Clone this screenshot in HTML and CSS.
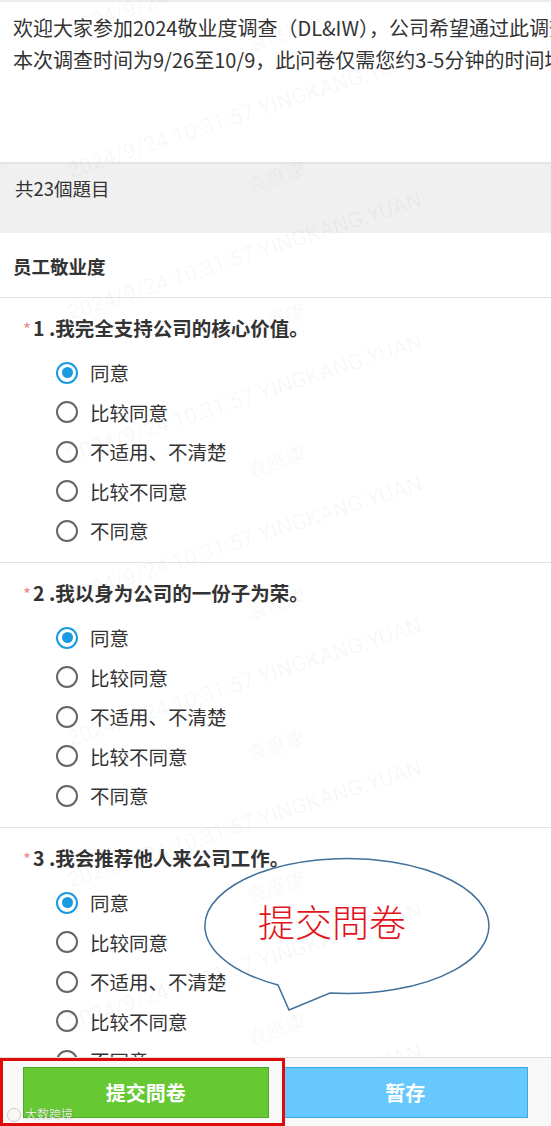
FILE: index.html
```html
<!DOCTYPE html>
<html lang="zh">
<head>
<meta charset="utf-8">
<title>2024敬业度调查</title>
<link rel="stylesheet" href="styles.css">
</head>
<body>
<div class="page">
  <section class="intro">
    <p>欢迎大家参加2024敬业度调查（DL&amp;IW），公司希望通过此调查了解员工的真实想法。</p>
    <p>本次调查时间为9/26至10/9，此问卷仅需您约3-5分钟的时间填写。</p>
  </section>
  <section class="count">共23個題目</section>
  <section class="group-title">员工敬业度</section>

  <section class="question">
    <h3 class="q-title"><span class="req">*</span>1 .我完全支持公司的核心价值。</h3>
    <ul class="options">
      <li><span class="radio checked"></span>同意</li>
      <li><span class="radio"></span>比较同意</li>
      <li><span class="radio"></span>不适用、不清楚</li>
      <li><span class="radio"></span>比较不同意</li>
      <li><span class="radio"></span>不同意</li>
    </ul>
  </section>

  <section class="question">
    <h3 class="q-title"><span class="req">*</span>2 .我以身为公司的一份子为荣。</h3>
    <ul class="options">
      <li><span class="radio checked"></span>同意</li>
      <li><span class="radio"></span>比较同意</li>
      <li><span class="radio"></span>不适用、不清楚</li>
      <li><span class="radio"></span>比较不同意</li>
      <li><span class="radio"></span>不同意</li>
    </ul>
  </section>

  <section class="question">
    <h3 class="q-title"><span class="req">*</span>3 .我会推荐他人来公司工作。</h3>
    <ul class="options">
      <li><span class="radio checked"></span>同意</li>
      <li><span class="radio"></span>比较同意</li>
      <li><span class="radio"></span>不适用、不清楚</li>
      <li><span class="radio"></span>比较不同意</li>
      <li><span class="radio"></span>不同意</li>
    </ul>
  </section>
</div>

<div class="watermarks" aria-hidden="true">
  <div class="wm-tile"><span class="wm-line">2024/9/24 10:31:57 YINGKANG.YUAN</span><span class="wm-name">袁應康</span></div>
  <div class="wm-tile"><span class="wm-line">2024/9/24 10:31:57 YINGKANG.YUAN</span><span class="wm-name">袁應康</span></div>
  <div class="wm-tile"><span class="wm-line">2024/9/24 10:31:57 YINGKANG.YUAN</span><span class="wm-name">袁應康</span></div>
  <div class="wm-tile"><span class="wm-line">2024/9/24 10:31:57 YINGKANG.YUAN</span><span class="wm-name">袁應康</span></div>
  <div class="wm-tile"><span class="wm-line">2024/9/24 10:31:57 YINGKANG.YUAN</span><span class="wm-name">袁應康</span></div>
  <div class="wm-tile"><span class="wm-line">2024/9/24 10:31:57 YINGKANG.YUAN</span><span class="wm-name">袁應康</span></div>
  <div class="wm-tile"><span class="wm-line">2024/9/24 10:31:57 YINGKANG.YUAN</span><span class="wm-name">袁應康</span></div>
  <div class="wm-tile"><span class="wm-line">2024/9/24 10:31:57 YINGKANG.YUAN</span><span class="wm-name">袁應康</span></div>
  <div class="wm-tile"><span class="wm-line">2024/9/24 10:31:57 YINGKANG.YUAN</span><span class="wm-name">袁應康</span></div>
</div>

<div class="bubble">
  <svg class="bubble-shape" width="300" height="165" viewBox="0 0 300 165">
    <path d="M 78 132 A 142 67.5 0 1 1 130 140 L 89 157 Z" fill="#ffffff" stroke="#41719c" stroke-width="1.5" stroke-linejoin="miter"/>
  </svg>
  <span class="bubble-text">提交問卷</span>
</div>

<footer class="actions">
  <button class="btn btn-submit">提交問卷</button>
  <button class="btn btn-save">暂存</button>
  <span class="brand">大数跨境</span>
</footer>
<div class="highlight" aria-hidden="true"></div>
</body>
</html>
```

FILE: styles.css
```css
* { box-sizing: border-box; }
html, body { margin: 0; padding: 0; }
body {
  width: 551px;
  background: #ffffff;
  font-family: "Noto Sans CJK SC", "Noto Sans", sans-serif;
  color: #333333;
  overflow: hidden;
}
.page { position: relative; padding-bottom: 120px; }

.intro {
  border-top: 2px solid #ececec;
  height: 162px;
  padding: 13px 0 0 13px;
  overflow: hidden;
}
.intro p {
  margin: 0 0 6px 0;
  font-size: 20px;
  line-height: 26px;
  white-space: nowrap;
  color: #333;
}

.count {
  height: 71px;
  background: #f0f0f0;
  box-shadow: inset 0 2px 2px rgba(0,0,0,0.05);
  padding: 13px 0 0 15px;
  font-size: 18.5px;
  line-height: 26px;
  color: #333;
}

.group-title {
  height: 65px;
  padding: 20px 0 0 13px;
  font-size: 18.5px;
  line-height: 26px;
  font-weight: 700;
  color: #333;
  border-bottom: 1px solid #e3e3e3;
}

.question {
  height: 265px;
  padding-top: 18px;
  border-bottom: 1px solid #e3e3e3;
}
.q-title {
  margin: 0;
  padding-left: 23px;
  font-size: 19.5px;
  line-height: 24px;
  font-weight: 700;
  color: #333;
}
.req {
  color: #f08a8a;
  font-weight: 400;
  font-size: 17px;
  margin-right: 2px;
}
.options {
  list-style: none;
  margin: 12px 0 0 0;
  padding: 0 0 0 56px;
}
.options li {
  height: 39.5px;
  display: flex;
  align-items: center;
  font-size: 19.5px;
  color: #333;
}
.radio {
  width: 22px;
  height: 22px;
  border: 2px solid #666666;
  border-radius: 50%;
  margin-right: 12px;
  flex: none;
  display: flex;
  align-items: center;
  justify-content: center;
}
.radio.checked {
  border: 2.5px solid #1a9be0;
}
.radio.checked::after {
  content: "";
  width: 11px;
  height: 11px;
  border-radius: 50%;
  background: #1a9be0;
}

/* watermark overlay */
.watermarks {
  position: absolute;
  left: 0;
  top: -42px;
  width: 551px;
  pointer-events: none;
  display: flex;
  flex-direction: column;
  z-index: 5;
}
.wm-tile {
  position: relative;
  height: 142px;
  flex: none;
}
.wm-line {
  position: absolute;
  left: 72px;
  top: 58px;
  font-family: Roboto, "Noto Sans", sans-serif;
  font-size: 22px;
  color: rgba(0,0,0,0.04);
  white-space: nowrap;
  transform: rotate(-18deg);
  transform-origin: 0 100%;
}
.wm-name {
  position: absolute;
  left: 246px;
  top: 62px;
  font-size: 20px;
  color: rgba(0,0,0,0.04);
  transform: rotate(-18deg);
  white-space: nowrap;
}

/* speech bubble annotation */
.bubble {
  position: absolute;
  left: 200px;
  top: 853px;
  width: 300px;
  height: 165px;
  z-index: 4;
}
.bubble-shape { display: block; }
.bubble-text {
  position: absolute;
  left: 58px;
  top: 46px;
  font-family: "Noto Sans CJK TC", "Noto Sans CJK SC", sans-serif;
  font-weight: 300;
  font-size: 37px;
  line-height: 44px;
  color: #e2141c;
}

/* bottom action bar */
.actions {
  position: fixed;
  left: 0;
  bottom: 0;
  width: 551px;
  height: 69px;
  background: #f8f8f8;
  border-top: 1px solid #dedede;
  display: flex;
  gap: 14px;
  padding: 9px 23px 0 23px;
  z-index: 10;
}
.btn {
  width: 246px;
  height: 51px;
  font-family: "Noto Sans CJK TC", "Noto Sans CJK SC", sans-serif;
  font-size: 20px;
  font-weight: 700;
  color: #ffffff;
  border-radius: 0;
  padding: 0;
}
.btn-submit {
  background: #66c933;
  border: 1px solid #4ea82a;
}
.btn-save {
  background: #66c8fc;
  border: 1px solid #3aa9e8;
}
.brand {
  position: absolute;
  left: 5px;
  bottom: 5px;
  font-size: 12px;
  line-height: 14px;
  color: rgba(255,255,255,0.85);
  text-shadow: 0 0 1px rgba(0,0,0,0.3);
  padding-left: 20px;
}
.brand::before {
  content: "";
  position: absolute;
  left: 2px;
  top: 1px;
  width: 12px;
  height: 12px;
  border: 1.5px solid rgba(200,200,200,0.9);
  border-radius: 50%;
}
.highlight {
  position: fixed;
  left: 0;
  bottom: 0;
  width: 285px;
  height: 68px;
  border: 3px solid #e00b0b;
  z-index: 11;
  pointer-events: none;
}
```
